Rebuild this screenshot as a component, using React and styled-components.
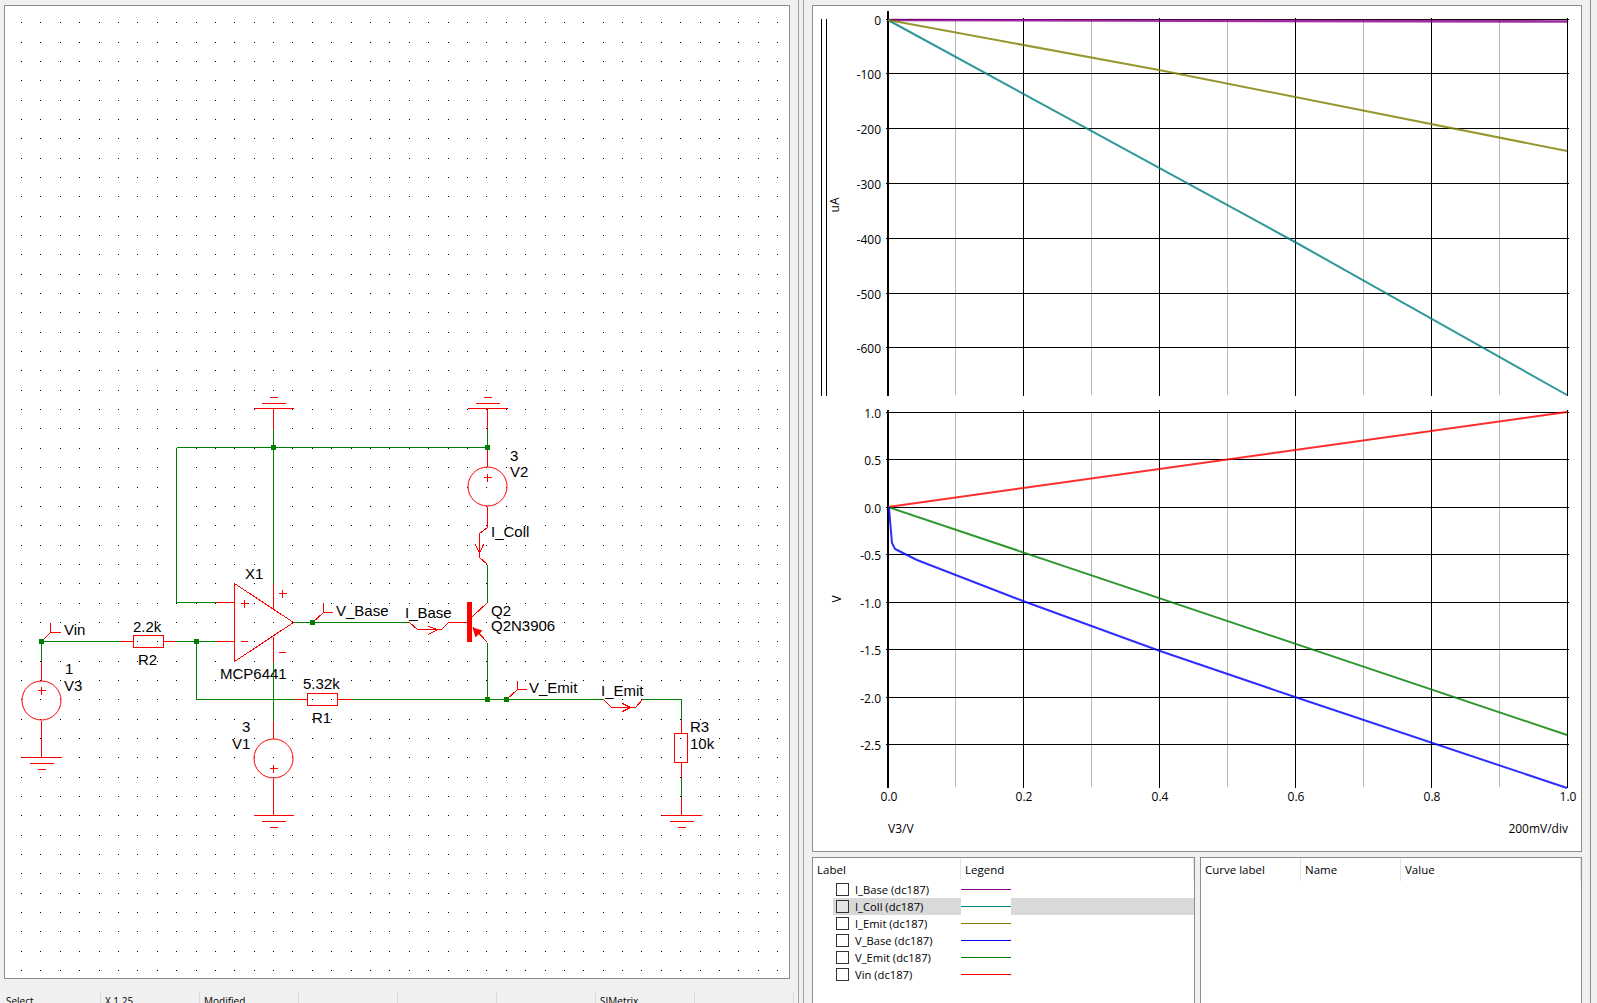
import styled, { createGlobalStyle } from "styled-components";

const GlobalStyle = createGlobalStyle`
  html, body {
    margin: 0;
    padding: 0;
    background: #f0f0f0;
    overflow: hidden;
  }
  * {
    box-sizing: border-box;
  }
`;

const UI_FONT = `"Open Sans", "Noto Sans", sans-serif`;

// ---------- schematic data, in page pixels ----------

const greenWires = [
  [41, 641, 119, 641],
  [175, 641, 215, 641],
  [196, 641, 196, 699],
  [176, 602, 215, 602],
  [176, 447, 176, 602],
  [176, 447, 487, 447],
  [273, 429, 273, 583],
  [273, 662, 273, 720],
  [293, 622, 409, 622],
  [487, 429, 487, 447],
  [487, 564, 487, 602],
  [487, 642, 487, 699],
  [196, 699, 294, 699],
  [351, 699, 603, 699],
  [642, 699, 681, 699],
  [681, 699, 681, 720],
  [681, 762, 681, 797],
  [41, 641, 41, 661],
];

const redWires = [
  [119, 641, 133, 641],
  [163, 641, 175, 641],
  [215, 641, 234, 641],
  [215, 602, 234, 602],
  [273, 408, 273, 429],
  [273, 583, 273, 609],
  [273, 636, 273, 662],
  [273, 720, 273, 738],
  [273, 778, 273, 815],
  [487, 408, 487, 429],
  [487, 447, 487, 466],
  [487, 506, 487, 527],
  [448, 622, 467, 622],
  [294, 699, 307, 699],
  [337, 699, 351, 699],
  [681, 720, 681, 733],
  [681, 762, 681, 777],
  [681, 797, 681, 815],
  [41, 661, 41, 680],
  [41, 720, 41, 757],
];

const strokes = [
  // flags
  "41,641 50,632 50,622",
  "50,632 60,632",
  "312,622 323,612 323,602",
  "323,612 332,612",
  "506,699 517,689 517,680",
  "517,689 526,689",
  // current probes
  "409,622 417,629 441,629 448,622",
  "428,626 437,629 428,634",
  "487,527 479,533 479,557 487,564",
  "475,544 479,553 483,544",
  "603,699 611,707 635,707 642,699",
  "622,703 630,707 622,711",
  // transistor leads
  "472,616 487,602",
  "473,627 487,642",
  // op amp
  "234,583 293,622 234,661 234,583",
];

const resistors = [
  { x: 133, y: 635, w: 30, h: 12 },
  { x: 307, y: 693, w: 30, h: 12 },
  { x: 674, y: 733, w: 13, h: 29 },
];

const sources = [
  { cx: 41, cy: 700, px: 41, py: 690 },
  { cx: 273, cy: 758, px: 273, py: 768 },
  { cx: 487, cy: 486, px: 487, py: 477 },
];

// tiers are offsets from the wire end
const grounds = [
  { x: 273, y: 408, tiers: [-5, -11] },
  { x: 487, y: 408, tiers: [-5, -11] },
  { x: 41, y: 757, tiers: [6, 12] },
  { x: 273, y: 815, tiers: [6, 12] },
  { x: 681, y: 815, tiers: [6, 12] },
];

const plusSigns = [
  [244, 603],
  [282, 593],
];

const minusSigns = [
  [244, 641],
  [282, 652],
];

const junctions = [
  [41, 641],
  [196, 641],
  [273, 447],
  [487, 447],
  [312, 622],
  [487, 699],
  [506, 699],
];

const partLabels = [
  ["X1", 245, 579],
  ["2.2k", 133, 632],
  ["R2", 138, 665],
  ["Vin", 64, 635],
  ["V_Base", 336, 616],
  ["MCP6441", 220, 679],
  ["5.32k", 303, 689],
  ["R1", 312, 723],
  ["1", 65, 674],
  ["V3", 64, 691],
  ["3", 242, 732],
  ["V1", 232, 749],
  ["3", 510, 461],
  ["V2", 510, 477],
  ["I_Coll", 491, 537],
  ["I_Base", 405, 618],
  ["Q2", 491, 616],
  ["Q2N3906", 491, 631],
  ["V_Emit", 529, 693],
  ["I_Emit", 601, 696],
  ["R3", 690, 732],
  ["10k", 690, 749],
];

const buildDots = () => {
  let d = "";
  for (let row = 0; row < 50; row++) {
    for (let col = 0; col < 40; col++) {
      const x = Math.round(21 + col * 19.39);
      const y = Math.round(970 - row * 19.34);
      d += `M${x} ${y}h1v1h-1z`;
    }
  }
  return d;
};

const gridDots = buildDots();

// ---------- plot data ----------

const majorX = [888, 1023, 1159, 1295, 1431, 1567];
const minorX = [955, 1091, 1227, 1363, 1499];
const xLabels = ["0.0", "0.2", "0.4", "0.6", "0.8", "1.0"];

const currentTicks = [
  ["0", 19],
  ["-100", 73],
  ["-200", 128],
  ["-300", 183],
  ["-400", 238],
  ["-500", 293],
  ["-600", 347],
];

const voltageTicks = [
  ["1.0", 412],
  ["0.5", 459],
  ["0.0", 507],
  ["-0.5", 554],
  ["-1.0", 602],
  ["-1.5", 649],
  ["-2.0", 697],
  ["-2.5", 744],
];

const curves = [
  { color: "#8b008b", points: "888,20 1567,21.5", weight: 2.6 },
  { color: "#008080", points: "888,20 1295,242 1567,395" },
  { color: "#808000", points: "888,20 1159,70 1567,151" },
  { color: "#ff0000", points: "888,507 1567,412" },
  { color: "#008000", points: "888,507 1567,735" },
  {
    color: "#0000ff",
    points: "889,507 890,520 892,543 895,549 901,552 917,560 1023,601 1160,651 1295,697 1567,788",
  },
];

const legendRows = [
  { label: "I_Base (dc187)", color: "#800080" },
  { label: "I_Coll (dc187)", color: "#008080", selected: true },
  { label: "I_Emit (dc187)", color: "#808000" },
  { label: "V_Base (dc187)", color: "#0000ff" },
  { label: "V_Emit (dc187)", color: "#008000" },
  { label: "Vin (dc187)", color: "#ff0000" },
];

const statusCells = ["Select", "X 1.25", "Modified", "", "", "", "SIMetrix", ""];

// ---------- layout ----------

const Page = styled.div`
  width: 1597px;
  height: 1003px;
  display: flex;
  overflow: hidden;
  background: #f0f0f0;
  font-family: ${UI_FONT};
`;

const LeftPane = styled.div`
  width: 798px;
  height: 100%;
  padding: 5px 8px 0 4px;
  display: flex;
  flex-direction: column;
`;

const Panel = styled.div`
  background: #fff;
  border: 1px solid #8b8d96;
  border-bottom-width: ${(p) => (p.$open ? 0 : "1px")};
`;

const SchematicPanel = styled(Panel)`
  width: 786px;
  height: 974px;
  flex: none;
`;

const Drawing = styled.svg`
  display: block;
  width: 100%;
  height: 100%;
`;

const StatusBar = styled.div`
  display: flex;
  margin-top: 13px;
  height: 30px;
  flex: none;
`;

const StatusCell = styled.div`
  width: ${(p) => (p.$first ? 97 : 99)}px;
  flex: none;
  padding: 1px 0 0 ${(p) => (p.$first ? 2 : 4)}px;
  font-size: 10px;
  line-height: 16px;
  color: #000;
  border-right: 1px solid #dadada;
`;

const Splitter = styled.div`
  width: 6px;
  flex: none;
  border-left: 1px solid #a0a0a0;
  border-right: 1px solid #a0a0a0;
`;

const RightPane = styled.div`
  width: 787px;
  flex: none;
  padding: 5px 8px 0 8px;
  display: flex;
  flex-direction: column;
  gap: 5px;
  border-right: 1px solid #8b8d96;
`;

const PlotPanel = styled(Panel)`
  height: 847px;
  flex: none;
`;

const ListRow = styled.div`
  display: flex;
  gap: 5px;
  flex: 1;
  min-height: 0;
`;

const LegendPanel = styled(Panel)`
  width: 383px;
  flex: none;
  height: 160px;
`;

const CursorPanel = styled(Panel)`
  width: 382px;
  flex: none;
  height: 160px;
`;

const HeaderRow = styled.div`
  display: flex;
  height: 23px;
`;

const HeaderCell = styled.div`
  width: ${(p) => p.$width}px;
  flex: none;
  padding-left: 4px;
  font-size: 11.5px;
  line-height: 24px;
  color: #000;
  border-right: 1px solid #e5e5e5;
`;

const LegendList = styled.div`
  display: flex;
  flex-direction: column;
`;

const LegendItem = styled.div`
  height: 17px;
  margin-left: 20px;
  display: flex;
  align-items: center;
  background: ${(p) => (p.$selected ? "#d9d9d9" : "transparent")};
`;

const CheckBox = styled.span`
  width: 13px;
  height: 13px;
  margin-left: 3px;
  flex: none;
  border: 1px solid #333;
  background: ${(p) => (p.$selected ? "#e4e4e4" : "#fff")};
`;

const ItemLabel = styled.span`
  width: 106px;
  flex: none;
  margin-left: 6px;
  font-size: 11.2px;
  line-height: 17px;
  white-space: nowrap;
  color: #000;
`;

const LegendSwatch = styled.span`
  width: 50px;
  height: 17px;
  flex: none;
  display: flex;
  align-items: center;
  background: #fff;
  &::after {
    content: "";
    display: block;
    width: 100%;
    height: 1px;
    background: ${(p) => p.$color};
  }
`;

// ---------- svg parts ----------

const Line = styled.line`
  stroke: ${(p) => p.$color};
  stroke-width: 1;
  shape-rendering: crispEdges;
`;

const Stroke = styled.polyline`
  fill: none;
  stroke: #ff0000;
  stroke-width: 1;
  shape-rendering: crispEdges;
`;

const ResistorBody = styled.rect`
  fill: none;
  stroke: #ff0000;
  stroke-width: 1;
  shape-rendering: crispEdges;
`;

const SourceBody = styled.circle`
  fill: none;
  stroke: #ff0000;
  stroke-width: 1;
`;

const Junction = styled.rect`
  fill: #008000;
  shape-rendering: crispEdges;
`;

const PartLabel = styled.text`
  font-family: "Liberation Sans", Arial, sans-serif;
  font-size: 15px;
  fill: #000;
`;

const PlotLine = styled.line`
  stroke: ${(p) => p.$color};
  stroke-width: ${(p) => p.$weight || 1};
  shape-rendering: crispEdges;
`;

const Curve = styled.polyline`
  fill: none;
  stroke: ${(p) => p.$color};
  stroke-width: ${(p) => p.$weight || 2};
  stroke-opacity: 0.82;
`;

const PlotLabel = styled.text`
  font-family: ${UI_FONT};
  font-size: 12px;
  fill: #000;
  text-anchor: ${(p) => p.$anchor || "end"};
`;

const Ground = ({ x, y, tiers }) => (
  <>
    <Line $color="#ff0000" x1={x - 20} y1={y} x2={x + 20} y2={y} />
    <Line $color="#ff0000" x1={x - 12} y1={y + tiers[0]} x2={x + 12} y2={y + tiers[0]} />
    <Line $color="#ff0000" x1={x - 4} y1={y + tiers[1]} x2={x + 4} y2={y + tiers[1]} />
  </>
);

const Plus = ({ x, y, size }) => (
  <>
    <Line $color="#ff0000" x1={x - size} y1={y} x2={x + size} y2={y} />
    <Line $color="#ff0000" x1={x} y1={y - size} x2={x} y2={y + size} />
  </>
);

const Schematic = () => (
  <Drawing viewBox="5 6 784 972">
    <path d={gridDots} fill="#000" shapeRendering="crispEdges" />
    {partLabels.map(([text, x, y]) => (
      <PartLabel key={text + x} x={x} y={y}>
        {text}
      </PartLabel>
    ))}
    <g transform="translate(0.5 0.5)">
      {greenWires.map(([x1, y1, x2, y2], i) => (
        <Line key={i} $color="#008000" x1={x1} y1={y1} x2={x2} y2={y2} />
      ))}
      {redWires.map(([x1, y1, x2, y2], i) => (
        <Line key={i} $color="#ff0000" x1={x1} y1={y1} x2={x2} y2={y2} />
      ))}
      {strokes.map((points) => (
        <Stroke key={points} points={points} />
      ))}
      {resistors.map((r) => (
        <ResistorBody key={r.x} x={r.x} y={r.y} width={r.w} height={r.h} />
      ))}
      {sources.map((s) => (
        <g key={s.cx}>
          <SourceBody cx={s.cx} cy={s.cy} r={19.5} />
          <Plus x={s.px} y={s.py} size={4} />
        </g>
      ))}
      {grounds.map((g) => (
        <Ground key={g.x + "-" + g.y} {...g} />
      ))}
      {plusSigns.map(([x, y]) => (
        <Plus key={x} x={x} y={y} size={4} />
      ))}
      {minusSigns.map(([x, y]) => (
        <Line key={x} $color="#ff0000" x1={x - 4} y1={y} x2={x + 3} y2={y} />
      ))}
      <path d="M472 627 L482 630 L475 637 Z" fill="#ff0000" />
    </g>
    <rect x={467} y={602} width={5} height={40} fill="#ff0000" shapeRendering="crispEdges" />
    {junctions.map(([x, y]) => (
      <Junction key={x + "-" + y} x={x - 2} y={y - 2} width={5} height={5} />
    ))}
  </Drawing>
);

const PlotAxes = ({ ticks, top, bottom, axisTop, majorTop }) => (
  <>
    {minorX.map((x) => (
      <PlotLine key={x} $color="#b8b8b8" x1={x + 0.5} y1={top} x2={x + 0.5} y2={bottom} />
    ))}
    {majorX.slice(1).map((x) => (
      <PlotLine key={x} $color="#000" x1={x + 0.5} y1={majorTop} x2={x + 0.5} y2={bottom + 1} />
    ))}
    {ticks.map(([text, y]) => (
      <g key={text}>
        <PlotLine $color="#000" x1={886} y1={y + 0.5} x2={1569} y2={y + 0.5} />
        <PlotLabel x={881} y={y + 5.5}>
          {text}
        </PlotLabel>
      </g>
    ))}
    <PlotLine $color="#000" $weight={2} x1={888} y1={axisTop} x2={888} y2={bottom + 1} />
  </>
);

const Plots = () => (
  <Drawing viewBox="813 6 768 845">
    <PlotAxes ticks={currentTicks} top={20} bottom={395} axisTop={11} majorTop={18} />
    <PlotAxes ticks={voltageTicks} top={412} bottom={787} axisTop={410} majorTop={410} />
    <PlotLine $color="#000" x1={821.5} y1={19} x2={821.5} y2={396} />
    <PlotLine $color="#000" x1={826.5} y1={19} x2={826.5} y2={396} />
    <PlotLabel $anchor="middle" transform="translate(839 205) rotate(-90)">
      uA
    </PlotLabel>
    <PlotLabel $anchor="middle" transform="translate(841 599) rotate(-90)">
      V
    </PlotLabel>
    {xLabels.map((text, i) => (
      <PlotLabel key={text} $anchor="middle" x={majorX[i] + 1} y={801}>
        {text}
      </PlotLabel>
    ))}
    <PlotLabel $anchor="start" x={888} y={833}>
      V3/V
    </PlotLabel>
    <PlotLabel x={1568} y={833}>
      200mV/div
    </PlotLabel>
    {curves.map((c) => (
      <Curve key={c.color} $color={c.color} $weight={c.weight} points={c.points} />
    ))}
  </Drawing>
);

export default function App() {
  return (
    <Page>
      <GlobalStyle />
      <LeftPane>
        <SchematicPanel>
          <Schematic />
        </SchematicPanel>
        <StatusBar>
          {statusCells.map((text, i) => (
            <StatusCell key={i} $first={i === 0}>
              {text}
            </StatusCell>
          ))}
        </StatusBar>
      </LeftPane>
      <Splitter />
      <RightPane>
        <PlotPanel>
          <Plots />
        </PlotPanel>
        <ListRow>
          <LegendPanel $open>
            <HeaderRow>
              <HeaderCell $width={148}>Label</HeaderCell>
              <HeaderCell $width={233}>Legend</HeaderCell>
            </HeaderRow>
            <LegendList>
              {legendRows.map((row) => (
                <LegendItem key={row.label} $selected={row.selected}>
                  <CheckBox $selected={row.selected} />
                  <ItemLabel>{row.label}</ItemLabel>
                  <LegendSwatch $color={row.color} />
                </LegendItem>
              ))}
            </LegendList>
          </LegendPanel>
          <CursorPanel $open>
            <HeaderRow>
              <HeaderCell $width={100}>Curve label</HeaderCell>
              <HeaderCell $width={100}>Name</HeaderCell>
              <HeaderCell $width={180}>Value</HeaderCell>
            </HeaderRow>
          </CursorPanel>
        </ListRow>
      </RightPane>
    </Page>
  );
}
